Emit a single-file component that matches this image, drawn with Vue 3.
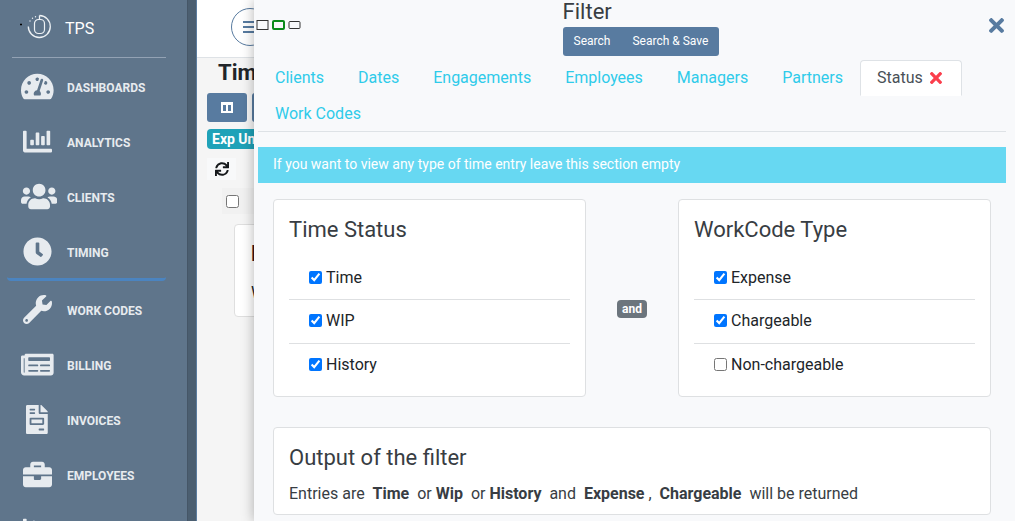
<script setup>
import { ref } from 'vue'

const nav = [
  { label: 'DASHBOARDS', w: 576, d: 'M288 32C128.94 32 0 160.94 0 320c0 52.8 14.25 102.26 39.06 144.8 5.61 9.62 16.3 15.2 27.44 15.2h443c11.14 0 21.83-5.58 27.44-15.2C561.75 422.26 576 372.8 576 320c0-159.06-128.94-288-288-288zm0 64c14.71 0 26.58 10.13 30.32 23.65-1.11 2.26-2.64 4.23-3.45 6.67l-9.22 27.67c-5.13 3.49-10.97 6.01-17.64 6.01-17.67 0-32-14.33-32-32S270.33 96 288 96zM96 384c-17.67 0-32-14.33-32-32s14.33-32 32-32 32 14.33 32 32-14.33 32-32 32zm48-160c-17.67 0-32-14.33-32-32s14.33-32 32-32 32 14.33 32 32-14.33 32-32 32zm246.77-72.41l-61.33 184C343.13 347.33 352 364.54 352 384c0 11.72-3.38 22.55-8.88 32H232.88c-5.5-9.45-8.88-20.28-8.88-32 0-33.94 26.5-61.43 59.9-63.59l61.34-184.01c4.17-12.56 17.73-19.45 30.36-15.17 12.57 4.19 19.35 17.79 15.17 30.36zm14.66 57.2l15.52-46.55c3.47-1.29 7.13-2.23 11.05-2.23 17.67 0 32 14.33 32 32s-14.33 32-32 32c-11.38-.01-20.89-6.28-26.57-15.22zM480 384c-17.67 0-32-14.33-32-32s14.33-32 32-32 32 14.33 32 32-14.33 32-32 32z' },
  { label: 'ANALYTICS', w: 512, d: 'M332.8 320h38.4c6.4 0 12.8-6.4 12.8-12.8V172.8c0-6.4-6.4-12.8-12.8-12.8h-38.4c-6.4 0-12.8 6.4-12.8 12.8v134.4c0 6.4 6.4 12.8 12.8 12.8zm96 0h38.4c6.4 0 12.8-6.4 12.8-12.8V76.8c0-6.4-6.4-12.8-12.8-12.8h-38.4c-6.4 0-12.8 6.4-12.8 12.8v230.4c0 6.4 6.4 12.8 12.8 12.8zm-288 0h38.4c6.4 0 12.8-6.4 12.8-12.8v-70.4c0-6.4-6.4-12.8-12.8-12.8h-38.4c-6.4 0-12.8 6.4-12.8 12.8v70.4c0 6.4 6.4 12.8 12.8 12.8zm96 0h38.4c6.4 0 12.8-6.4 12.8-12.8V108.8c0-6.4-6.4-12.8-12.8-12.8h-38.4c-6.4 0-12.8 6.4-12.8 12.8v198.4c0 6.4 6.4 12.8 12.8 12.8zM496 384H64V80c0-8.84-7.16-16-16-16H16C7.16 64 0 71.16 0 80v336c0 17.67 14.33 32 32 32h464c8.84 0 16-7.16 16-16v-32c0-8.84-7.16-16-16-16z' },
  { label: 'CLIENTS', w: 640, d: 'M96 224c35.3 0 64-28.7 64-64s-28.7-64-64-64-64 28.7-64 64 28.7 64 64 64zm448 0c35.3 0 64-28.7 64-64s-28.7-64-64-64-64 28.7-64 64 28.7 64 64 64zm32 32h-64c-17.6 0-33.5 7.1-45.1 18.6 40.3 22.1 68.9 62 75.1 109.4h66c17.7 0 32-14.3 32-32v-32c0-35.3-28.7-64-64-64zm-256 0c61.9 0 112-50.1 112-112S381.9 32 320 32 208 82.1 208 144s50.1 112 112 112zm76.8 32h-8.3c-20.8 10-43.9 16-68.5 16s-47.6-6-68.5-16h-8.3C179.6 288 128 339.6 128 403.2V432c0 26.5 21.5 48 48 48h288c26.5 0 48-21.5 48-48v-28.8c0-63.6-51.6-115.2-115.2-115.2zm-223.7-13.4C161.5 263.1 145.6 256 128 256H64c-35.3 0-64 28.7-64 64v32c0 17.7 14.3 32 32 32h65.9c6.3-47.4 34.9-87.3 75.2-109.4z' },
  { label: 'TIMING', w: 512, active: true, d: 'M256,8C119,8,8,119,8,256S119,504,256,504,504,393,504,256,393,8,256,8Zm92.49,313h0l-20,25a16,16,0,0,1-22.49,2.5h0l-67-49.72a40,40,0,0,1-15-31.23V112a16,16,0,0,1,16-16h32a16,16,0,0,1,16,16V256l58,42.5A16,16,0,0,1,348.49,321Z' },
  { label: 'WORK CODES', w: 512, d: 'M507.73 109.1c-2.24-9.03-13.54-12.09-20.12-5.51l-74.36 74.36-67.88-11.31-11.31-67.88 74.36-74.36c6.62-6.62 3.43-17.9-5.66-20.16-47.38-11.74-99.55.91-136.58 37.93-39.64 39.64-50.55 97.1-34.05 147.2L18.74 402.76c-24.99 24.99-24.99 65.51 0 90.5 24.99 24.99 65.51 24.99 90.5 0l213.21-213.21c50.12 16.71 107.47 5.68 147.37-34.22 37.07-37.07 49.7-89.32 37.91-136.73zM64 472c-13.25 0-24-10.75-24-24 0-13.26 10.75-24 24-24s24 10.74 24 24c0 13.25-10.75 24-24 24z' },
  { label: 'BILLING', w: 576, d: 'M552 64H88c-13.255 0-24 10.745-24 24v8H24c-13.255 0-24 10.745-24 24v272c0 30.928 25.072 56 56 56h472c26.51 0 48-21.49 48-48V88c0-13.255-10.745-24-24-24zM56 400a8 8 0 0 1-8-8V144h16v248a8 8 0 0 1-8 8zm236-16H140c-6.627 0-12-5.373-12-12v-8c0-6.627 5.373-12 12-12h152c6.627 0 12 5.373 12 12v8c0 6.627-5.373 12-12 12zm208 0H348c-6.627 0-12-5.373-12-12v-8c0-6.627 5.373-12 12-12h152c6.627 0 12 5.373 12 12v8c0 6.627-5.373 12-12 12zm-208-96H140c-6.627 0-12-5.373-12-12v-8c0-6.627 5.373-12 12-12h152c6.627 0 12 5.373 12 12v8c0 6.627-5.373 12-12 12zm208 0H348c-6.627 0-12-5.373-12-12v-8c0-6.627 5.373-12 12-12h152c6.627 0 12 5.373 12 12v8c0 6.627-5.373 12-12 12zm0-96H140c-6.627 0-12-5.373-12-12v-40c0-6.627 5.373-12 12-12h360c6.627 0 12 5.373 12 12v40c0 6.627-5.373 12-12 12z' },
  { label: 'INVOICES', w: 384, d: 'M288 256H96v64h192v-64zm89-151L279.1 7c-4.5-4.5-10.6-7-17-7H256v128h128v-6.1c0-6.3-2.5-12.4-7-16.9zm-153 31V0H24C10.7 0 0 10.7 0 24v464c0 13.3 10.7 24 24 24h336c13.3 0 24-10.7 24-24V160H248c-13.2 0-24-10.8-24-24zM64 72c0-4.42 3.58-8 8-8h80c4.42 0 8 3.58 8 8v16c0 4.42-3.58 8-8 8H72c-4.42 0-8-3.58-8-8V72zm0 64c0-4.42 3.58-8 8-8h80c4.42 0 8 3.58 8 8v16c0 4.42-3.58 8-8 8H72c-4.42 0-8-3.58-8-8v-16zm256 304c0 4.42-3.58 8-8 8h-80c-4.42 0-8-3.58-8-8v-16c0-4.42 3.58-8 8-8h80c4.42 0 8 3.58 8 8v16zm0-200v96c0 8.84-7.16 16-16 16H80c-8.84 0-16-7.16-16-16v-96c0-8.84 7.16-16 16-16h224c8.84 0 16 7.16 16 16z' },
  { label: 'EMPLOYEES', w: 512, d: 'M320 336c0 8.84-7.16 16-16 16h-96c-8.84 0-16-7.16-16-16v-48H0v144c0 25.6 22.4 48 48 48h416c25.6 0 48-22.4 48-48V288H320v48zm144-208h-80V80c0-25.6-22.4-48-48-48H176c-25.6 0-48 22.4-48 48v48H48c-25.6 0-48 22.4-48 48v80h512v-80c0-25.6-22.4-48-48-48zm-144 0H192V96h128v32z' },
  { label: '', w: 512, d: 'M500 384c6.6 0 12 5.4 12 12v40c0 6.6-5.4 12-12 12H12c-6.6 0-12-5.4-12-12V76c0-6.6 5.4-12 12-12h40c6.6 0 12 5.4 12 12v308h436zM372.7 159.500L288 216l-85.300-113.700c-5.100-6.800-15.500-6.300-19.900 1L96 248v104h384l-89.900-187.800c-3.200-6.500-11.400-8.700-17.400-4.700z' },
]

const times = 'M242.72 256l100.07-100.07c12.28-12.28 12.28-32.19 0-44.48l-22.24-22.24c-12.28-12.28-32.19-12.28-44.48 0L176 189.28 75.93 89.21c-12.28-12.28-32.19-12.28-44.48 0L9.21 111.45c-12.28 12.28-12.28 32.19 0 44.48L109.28 256 9.21 356.07c-12.28 12.28-12.28 32.19 0 44.48l22.24 22.24c12.28 12.28 32.2 12.28 44.48 0L176 322.72l100.07 100.07c12.28 12.28 32.2 12.28 44.48 0l22.24-22.24c12.28-12.28 12.28-32.19 0-44.48L242.72 256z'

const tabs = ['Clients', 'Dates', 'Engagements', 'Employees', 'Managers', 'Partners', 'Status', 'Work Codes']

const groups = ref([
  { title: 'Time Status', options: [
    { label: 'Time', on: true },
    { label: 'WIP', on: true },
    { label: 'History', on: true },
  ] },
  { title: 'WorkCode Type', options: [
    { label: 'Expense', on: true },
    { label: 'Chargeable', on: true },
    { label: 'Non-chargeable', on: false },
  ] },
])
</script>

<template>
  <div class="app">
    <aside class="sidebar">
      <div class="brand">
        <svg class="logo" viewBox="0 0 34 28" fill="none" stroke="#eef2f5">
          <path d="M21.5 2.5A11 11 0 1 1 10.300 13.500" stroke-width="1.300" />
          <path d="M21.5 2.5v4" stroke-width="1.300" />
          <rect x="16.500" y="6.500" width="10" height="14" rx="4" stroke-width="1.200" />
          <g fill="#eef2f5" stroke="none">
            <circle cx="17.500" cy="3.800" r=".7" /><circle cx="14.500" cy="5.200" r=".7" /><circle cx="12" cy="8" r=".7" />
          </g>
          <path d="M2 11.500h2" stroke="#000" stroke-width="1.600" />
        </svg>
        <span>TPS</span>
      </div>
      <nav>
        <a v-for="item in nav" :key="item.label" href="#" class="nav-item" :class="{ active: item.active }">
          <span class="nav-icon">
            <svg :viewBox="`0 0 ${item.w} 512`" fill="currentColor"><path :d="item.d" /></svg>
          </span>
          <span>{{ item.label }}</span>
        </a>
      </nav>
    </aside>
    <div class="gutter"></div>

    <main class="page">
      <header class="topbar">
        <button class="menu" aria-label="Menu">
          <svg viewBox="0 0 14 12" stroke="#587ba0" stroke-width="2"><path d="M0 1h14M0 6h14M0 11h14" /></svg>
        </button>
      </header>
      <h1>Tim</h1>
      <div class="tools">
        <button class="tool" aria-label="Columns">
          <svg viewBox="0 0 12 11" fill="none" stroke="#fff"><path d="M0 1.500h12" stroke-width="3" /><path d="M1 2v8h10V2M6 2v8" stroke-width="2" /></svg>
        </button>
        <button class="tool" aria-label="More"></button>
      </div>
      <span class="tag">Exp Un</span>
      <button class="refresh" aria-label="Refresh">
        <svg viewBox="0 0 512 512" fill="#16191c"><path d="M440.65 12.57l4 82.77A247.16 247.16 0 0 0 255.83 8C134.73 8 33.91 94.92 12.29 209.82A12 12 0 0 0 24.09 224h49.05a12 12 0 0 0 11.67-9.26 175.91 175.91 0 0 1 317-56.94l-101.46-4.86a12 12 0 0 0-12.57 12v47.41a12 12 0 0 0 12 12H500a12 12 0 0 0 12-12V12a12 12 0 0 0-12-12h-47.37a12 12 0 0 0-11.98 12.57zM255.83 432a175.61 175.61 0 0 1-146-77.8l101.8 4.87a12 12 0 0 0 12.57-12v-47.4a12 12 0 0 0-12-12H12a12 12 0 0 0-12 12V500a12 12 0 0 0 12 12h47.35a12 12 0 0 0 12-12.6l-4.15-82.57A247.17 247.17 0 0 0 255.83 504c121.11 0 221.93-86.92 243.55-201.82a12 12 0 0 0-11.8-14.18h-49.05a12 12 0 0 0-11.67 9.26A175.86 175.86 0 0 1 255.83 432z" /></svg>
      </button>
      <div class="select-row"><input type="checkbox" aria-label="Select all" /></div>
      <article class="entry">
        <h2>N</h2>
        <p>W</p>
      </article>
    </main>

    <section class="drawer">
      <header class="drawer-head">
        <svg class="boxes" viewBox="0 0 46 12" fill="none">
          <rect x="1" y="1.500" width="11" height="9" stroke="#333" />
          <rect x="17" y="2" width="11" height="8" rx="1" stroke="#0a8a1a" stroke-width="2" />
          <rect x="33" y="2.500" width="11" height="7" rx="1" stroke="#333" />
        </svg>
        <div>
          <h2>Filter</h2>
          <div class="actions"><button>Search</button><button>Search &amp; Save</button></div>
        </div>
        <button class="close" aria-label="Close">
          <svg viewBox="0 80 352 352" fill="currentColor"><path :d="times" /></svg>
        </button>
      </header>

      <nav class="tabs">
        <a v-for="tab in tabs" :key="tab" href="#" :class="{ current: tab === 'Status' }">{{ tab }}<svg v-if="tab === 'Status'" viewBox="0 80 352 352" fill="#fb3e4c"><path :d="times" /></svg></a>
      </nav>

      <p class="notice">If you want to view any type of time entry leave this section empty</p>

      <div class="body">
        <div class="groups">
          <template v-for="(group, i) in groups" :key="group.title">
            <span v-if="i" class="and">and</span>
            <section class="card">
              <h3>{{ group.title }}</h3>
              <ul>
                <li v-for="option in group.options" :key="option.label">
                  <label><input v-model="option.on" type="checkbox" />{{ option.label }}</label>
                </li>
              </ul>
            </section>
          </template>
        </div>
        <section class="card output">
          <h3>Output of the filter</h3>
          <p>Entries are &nbsp;<strong>Time</strong>&nbsp; or <strong>Wip</strong>&nbsp; or <strong>History</strong>&nbsp; and &nbsp;<strong>Expense</strong> , &nbsp;<strong>Chargeable</strong>&nbsp; will be returned</p>
        </section>
      </div>
    </section>
  </div>
</template>

<style>
body {
  margin: 0;
  background: #f5f5f5;
}
</style>

<style scoped>
* {
  box-sizing: border-box;
}

.app {
  position: relative;
  display: grid;
  grid-template-columns: 187px 10px 1fr;
  height: 100vh;
  overflow: hidden;
  font: 16px/20px Roboto, "Liberation Sans", sans-serif;
  color: #212529;
}

h1, h2, h3, p, ul {
  margin: 0;
  padding: 0;
}

button {
  border: 0;
  padding: 0;
  font: inherit;
  cursor: pointer;
}

a {
  text-decoration: none;
}

svg {
  display: block;
}

input[type="checkbox"] {
  width: 13px;
  height: 13px;
  margin: 0;
}

.sidebar {
  background: #5f758b;
  overflow: hidden;
}

.brand {
  display: flex;
  align-items: center;
  gap: 13px;
  height: 58px;
  margin: 0 21px 4px 12px;
  padding-left: 6px;
  border-bottom: 1px solid #93a2b4;
  color: #fff;
}

.logo {
  width: 34px;
  height: 28px;
  margin-bottom: 4px;
}

.nav-item {
  display: flex;
  align-items: center;
  gap: 14px;
  height: 51px;
  margin: 0 21px 4px 7px;
  padding-left: 14px;
  color: #e7ebef;
  font-size: 12px;
  font-weight: 700;
}

.nav-item.active {
  height: 54px;
  border-bottom: 3px solid #4b84c0;
  border-radius: 4px;
}

.nav-icon {
  width: 32px;
  flex: none;
}

.nav-icon svg {
  height: 29px;
  margin: 0 auto 2px;
}

.gutter {
  background: #4b5e70;
  border-left: 1px solid #455667;
  border-right: 1px solid #5c7d9f;
}

.topbar {
  height: 58px;
  padding: 8px 34px;
  background: #fff;
  border-bottom: 1px solid #dee2e6;
}

.menu {
  display: grid;
  place-items: center;
  width: 38px;
  height: 38px;
  border: 1px solid #587ba0;
  border-radius: 50%;
  background: #fff;
}

.menu svg {
  width: 14px;
  height: 12px;
}

h1 {
  padding: 2px 0 7px 21px;
  font-size: 22px;
  line-height: 26px;
}

.tools {
  display: flex;
  gap: 5px;
  padding-left: 10px;
}

.tool {
  display: grid;
  place-items: center;
  width: 40px;
  height: 29px;
  border-radius: 3px;
  background: #587ba0;
}

.tool svg {
  width: 12px;
  height: 11px;
}

.tag {
  display: block;
  width: 100px;
  margin: 7px 0 9px 10px;
  padding-left: 5px;
  border-radius: 4px;
  background: #1fa2b8;
  color: #fff;
  font-size: 14px;
  font-weight: 700;
}

.refresh {
  display: grid;
  place-items: center;
  width: 29px;
  height: 22px;
  margin-left: 10px;
  background: #f8f9fa;
}

.refresh svg {
  width: 14px;
  height: 14px;
}

.select-row {
  display: flex;
  align-items: center;
  height: 26px;
  margin: 8px 0 10px 25px;
  padding-left: 4px;
  background: #f1f1f1;
}

.entry {
  margin-left: 37px;
  padding: 16px 15px 13px 16px;
  border: 1px solid #dfdfdf;
  border-radius: 4px;
  background: #fff;
}

.entry h2 {
  margin-bottom: 16px;
  color: #3a1219;
  font-size: 22px;
  line-height: 26px;
}

.drawer {
  position: absolute;
  inset: 0 0 0 254px;
  padding: 0 9px 0 4px;
  background: #f8f9fb;
  box-shadow: 0 0 12px rgba(0, 0, 0, 0.3);
  overflow: hidden;
}

.drawer-head {
  display: grid;
  grid-template-columns: 5fr 7fr auto;
  align-items: start;
  height: 60px;
  padding-right: 2px;
}

.boxes {
  width: 46px;
  height: 12px;
  margin: 19px 0 0 -2px;
}

.drawer h2, .card h3 {
  color: #383d43;
  font-size: 22px;
  font-weight: 400;
  line-height: 27px;
}

.drawer-head h2 {
  margin-top: -2px;
  margin-bottom: 2px;
}

.actions {
  display: flex;
}

.actions button {
  height: 29px;
  padding: 0 11px 2px;
  background: #587ba0;
  color: #fff;
  font-size: 12px;
}

.actions button:first-child {
  border-radius: 3px 0 0 3px;
}

.actions button:last-child {
  border-radius: 0 3px 3px 0;
}

.close {
  margin-top: 18px;
  background: none;
  color: #587ba0;
}

.close svg {
  width: 15px;
  height: 15px;
}

.tabs {
  display: flex;
  flex-wrap: wrap;
  row-gap: 1px;
  border-bottom: 1px solid #dee2e6;
}

.tabs a {
  display: flex;
  align-items: center;
  margin-bottom: -1px;
  padding: 7px 16px 8px;
  border: 1px solid transparent;
  border-radius: 4px 4px 0 0;
  color: #2fcbea;
  line-height: 19px;
}

.tabs .current {
  border-color: #dee2e6 #dee2e6 #fff;
  background: #fff;
  color: #495057;
}

.tabs svg {
  width: 12px;
  height: 12px;
  margin: 0 3px 0 7px;
}

.notice {
  margin: 15px 0 16px;
  padding: 7px 15px 9px;
  background: #67d8f2;
  color: #fff;
  font-size: 14px;
}

.body {
  padding: 0 15px;
}

.groups {
  display: grid;
  grid-template-columns: 1fr 92px 1fr;
  align-items: center;
  margin-bottom: 30px;
}

.card {
  padding: 16px 15px 9px;
  border: 1px solid #dee0e2;
  border-radius: 4px;
  background: #fff;
}

.card h3 {
  margin-bottom: 13px;
}

.card li {
  display: flex;
  align-items: center;
  height: 44px;
  padding: 0 0 2px 20px;
  border-bottom: 1px solid #dee0e2;
}

.card li:first-child {
  padding-bottom: 0;
}

.card li:last-child {
  height: 43px;
  border-bottom: 0;
}

.card label {
  display: flex;
  align-items: center;
  gap: 4px;
}

.and {
  justify-self: center;
  margin-top: 22px;
  padding: 0 5px;
  border-radius: 4px;
  background: #6c757d;
  color: #fff;
  font-size: 12px;
  font-weight: 700;
  line-height: 18px;
}

.output {
  padding-bottom: 10px;
}

.output p {
  color: #383d43;
}
</style>
